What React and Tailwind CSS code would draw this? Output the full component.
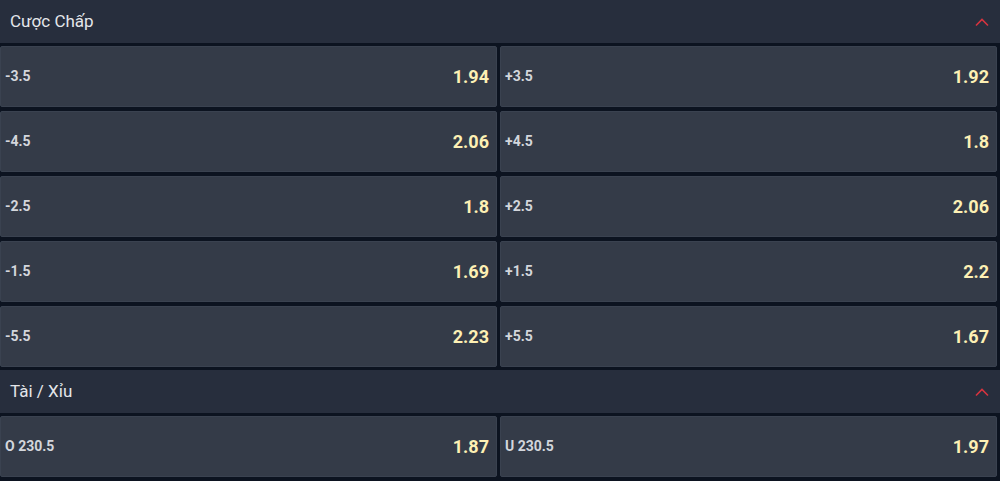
import React from 'react';

const handicap = [
  ['-3.5', '1.94', '+3.5', '1.92'],
  ['-4.5', '2.06', '+4.5', '1.8'],
  ['-2.5', '1.8', '+2.5', '2.06'],
  ['-1.5', '1.69', '+1.5', '2.2'],
  ['-5.5', '2.23', '+5.5', '1.67'],
];

const totals = [['O 230.5', '1.87', 'U 230.5', '1.97']];

const Chevron = () => (
  <svg width="16" height="10" viewBox="0 0 16 10" fill="none" className="shrink-0">
    <path d="M2 8.5L8 2.5L14 8.5" stroke="#d6343f" strokeWidth="1.6" />
  </svg>
);

const Header = ({ title }) => (
  <div className="h-[43px] bg-[#272e3d] flex items-center justify-between pl-[10px] pr-[10px]">
    <span className="text-[17px] text-[#e4e6ea]">{title}</span>
    <Chevron />
  </div>
);

const Cell = ({ label, odds }) => (
  <div className="h-[61px] bg-[#343b48] rounded-[2px] border border-[#3a4250] flex items-center justify-between pl-[4px] pr-[7px]">
    <span className="text-[14px] font-bold text-[#d3d6dc] -mt-[1px]">{label}</span>
    <span className="text-[18px] font-bold text-[#fdf0b4]">{odds}</span>
  </div>
);

const Market = ({ title, rows }) => (
  <div className="flex flex-col gap-[3px]">
    <Header title={title} />
    <div className="grid grid-cols-2 gap-x-[3px] gap-y-[4px] pr-[3px]">
      {rows.map((r, i) => (
        <React.Fragment key={i}>
          <Cell label={r[0]} odds={r[1]} />
          <Cell label={r[2]} odds={r[3]} />
        </React.Fragment>
      ))}
    </div>
  </div>
);

export default function App() {
  return (
    <div className="w-[1000px] h-[481px] overflow-hidden bg-[#0c1320] flex flex-col gap-[3px]" style={{ fontFamily: 'Roboto, "Liberation Sans", sans-serif' }}>
      <Market title="Cược Chấp" rows={handicap} />
      <Market title="Tài / Xỉu" rows={totals} />
    </div>
  );
}
